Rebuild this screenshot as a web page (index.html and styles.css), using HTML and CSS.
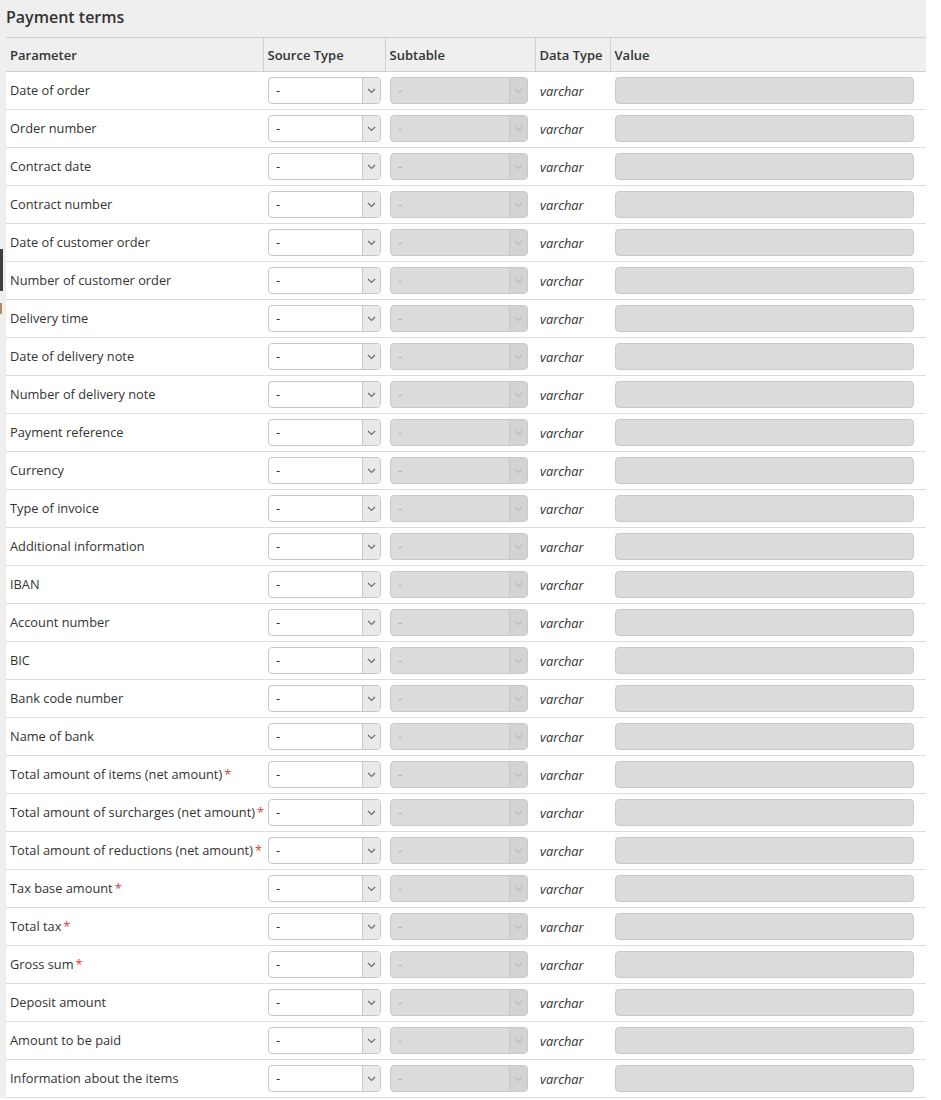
FILE: index.html
```html
<!DOCTYPE html>
<html lang="en">
  <head>
    <meta charset="UTF-8" />
    <title>Payment terms</title>
    <link rel="stylesheet" href="styles.css">
  </head>

  <body>
    <div class="edge-marker"></div>
    <div class="edge-marker edge-marker-small"></div>

    <section class="panel">
      <h2 class="panel-title">Payment terms</h2>

      <table class="params">
        <colgroup>
          <col class="col-param" />
          <col class="col-source" />
          <col class="col-subtable" />
          <col class="col-type" />
          <col class="col-value" />
        </colgroup>
        <thead>
          <tr>
            <th>Parameter</th>
            <th>Source Type</th>
            <th>Subtable</th>
            <th>Data Type</th>
            <th>Value</th>
          </tr>
        </thead>
        <tbody id="rows"></tbody>
      </table>
    </section>

    <script>
      const params = [
        ["Date of order"],
        ["Order number"],
        ["Contract date"],
        ["Contract number"],
        ["Date of customer order"],
        ["Number of customer order"],
        ["Delivery time"],
        ["Date of delivery note"],
        ["Number of delivery note"],
        ["Payment reference"],
        ["Currency"],
        ["Type of invoice"],
        ["Additional information"],
        ["IBAN"],
        ["Account number"],
        ["BIC"],
        ["Bank code number"],
        ["Name of bank"],
        ["Total amount of items (net amount)", true],
        ["Total amount of surcharges (net amount)", true],
        ["Total amount of reductions (net amount)", true],
        ["Tax base amount", true],
        ["Total tax", true],
        ["Gross sum", true],
        ["Deposit amount"],
        ["Amount to be paid"],
        ["Information about the items"],
      ];

      const chevron =
        '<svg width="9" height="6" viewBox="0 0 9 6"><path d="M1 1l3.5 3.5L8 1" fill="none" stroke="currentColor" stroke-width="1.1"/></svg>';

      const rows = params
        .map(([name, required]) => {
          const star = required ? '<span class="required">*</span>' : "";
          return `
          <tr>
            <td class="param-name">${name}${star}</td>
            <td>
              <div class="select">
                <span class="select-text">-</span>
                <span class="select-arrow">${chevron}</span>
              </div>
            </td>
            <td>
              <div class="select select-disabled">
                <span class="select-text">-</span>
                <span class="select-arrow">${chevron}</span>
              </div>
            </td>
            <td class="data-type">varchar</td>
            <td><div class="value-input"></div></td>
          </tr>`;
        })
        .join("");

      document.getElementById("rows").innerHTML = rows;
    </script>
  </body>
</html>
```

FILE: styles.css
```css
* {
  margin: 0;
  padding: 0;
  box-sizing: border-box;
}

body {
  font-family: "Open Sans", "Liberation Sans", sans-serif;
  font-size: 13px;
  color: #333333;
  background-color: #ffffff;
  position: relative;
}

.edge-marker {
  position: absolute;
  left: 0;
  top: 249px;
  width: 3px;
  height: 42px;
  background-color: #3d3f44;
  z-index: 2;
}

.edge-marker-small {
  top: 303px;
  width: 2px;
  height: 11px;
  background-color: #b9895a;
}

.panel {
  width: 926px;
  background-color: #efefef;
  padding-left: 6px;
}

.panel-title {
  height: 37px;
  font-size: 16px;
  font-weight: 600;
  line-height: 34px;
  color: #333333;
}

.params {
  width: 920px;
  border-collapse: collapse;
  table-layout: fixed;
  background-color: #ffffff;
}

.col-param {
  width: 257px;
}

.col-source {
  width: 122px;
}

.col-subtable {
  width: 150px;
}

.col-type {
  width: 75px;
}

.col-value {
  width: 316px;
}

.params th {
  height: 34px;
  background-color: #efefef;
  border-top: 1px solid #cfcfcf;
  border-bottom: 1px solid #cfcfcf;
  border-left: 1px solid #cfcfcf;
  text-align: left;
  font-weight: 600;
  padding: 0 4px;
  white-space: nowrap;
}

.params th:first-child {
  border-left: none;
}

.params td {
  height: 38px;
  border-bottom: 1px solid #dcdcdc;
  padding: 0 5px;
  vertical-align: middle;
  font-size: 12.8px;
}

.params td.param-name {
  padding-left: 4px;
  padding-right: 0;
  padding-bottom: 2px;
  white-space: nowrap;
}

.required {
  color: #e0403a;
  margin-left: 2px;
}

.data-type {
  font-style: italic;
}

.select {
  display: flex;
  width: 113px;
  height: 27px;
  border: 1px solid #c6c6c6;
  border-radius: 4px;
  background-color: #ffffff;
  overflow: hidden;
}

.select-text {
  flex: 1;
  padding-left: 7px;
  line-height: 25px;
  font-size: 13px;
}

.select-arrow {
  width: 18px;
  display: flex;
  align-items: center;
  justify-content: center;
  background-color: #e9e9e9;
  border-left: 1px solid #c6c6c6;
  color: #6a6a6a;
}

.select-disabled {
  width: 138px;
  background-color: #dcdcdc;
  border-color: #c9c9c9;
}

.select-disabled .select-text {
  color: #a8a8a8;
}

.select-disabled .select-arrow {
  background-color: #d3d3d3;
  border-left-color: #c9c9c9;
  color: #b8b8b8;
}

.value-input {
  width: 299px;
  height: 27px;
  background-color: #dcdcdc;
  border: 1px solid #c9c9c9;
  border-radius: 4px;
}
```
